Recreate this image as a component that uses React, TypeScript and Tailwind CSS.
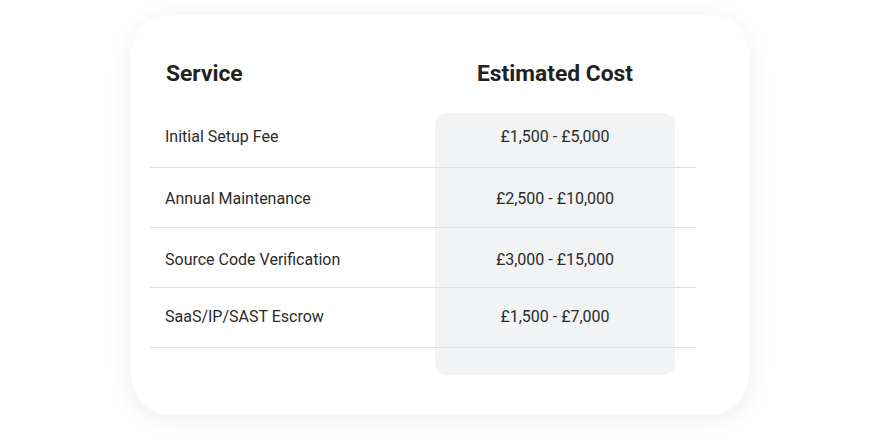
import React from "react";

const rows = [
  { s: "Initial Setup Fee", c: "£1,500 - £5,000", h: "h-[55px]", pt: "pt-[12px]" },
  { s: "Annual Maintenance", c: "£2,500 - £10,000", h: "h-[60px]", pt: "pt-[19px]" },
  { s: "Source Code Verification", c: "£3,000 - £15,000", h: "h-[60px]", pt: "pt-[20px]" },
  { s: "SaaS/IP/SAST Escrow", c: "£1,500 - £7,000", h: "h-[60px]", pt: "pt-[17px]" },
];

export default function App() {
  return (
    <div
      className="w-[880px] h-[440px] bg-white flex justify-center pt-[15px]"
      style={{ fontFamily: "Roboto, 'Liberation Sans', sans-serif" }}
    >
      <div className="w-[618px] h-[400px] bg-white rounded-[40px] shadow-[0_4px_28px_rgba(0,0,0,0.07)] pl-[19px] pt-[44px]">
        <div className="w-[546px]">
          <div className="flex h-[54px] text-[22.8px] leading-[30px] font-bold text-[#222222]">
            <div className="w-[285px] pl-[16px]">Service</div>
            <div className="w-[240px] text-center">Estimated Cost</div>
          </div>
          <div className="relative">
            <div className="absolute left-[285px] top-0 w-[240px] h-[262px] bg-[#f2f3f5] rounded-[12px]" />
            <div className="relative">
              {rows.map((r) => (
                <div
                  key={r.s}
                  className={`flex ${r.h} ${r.pt} border-b border-[#e0e0e0] text-[16px] leading-[24px] text-[#2b2b2b]`}
                >
                  <div className="w-[285px] pl-[15px]">{r.s}</div>
                  <div className="w-[240px] text-center">{r.c}</div>
                </div>
              ))}
            </div>
          </div>
        </div>
      </div>
    </div>
  );
}
